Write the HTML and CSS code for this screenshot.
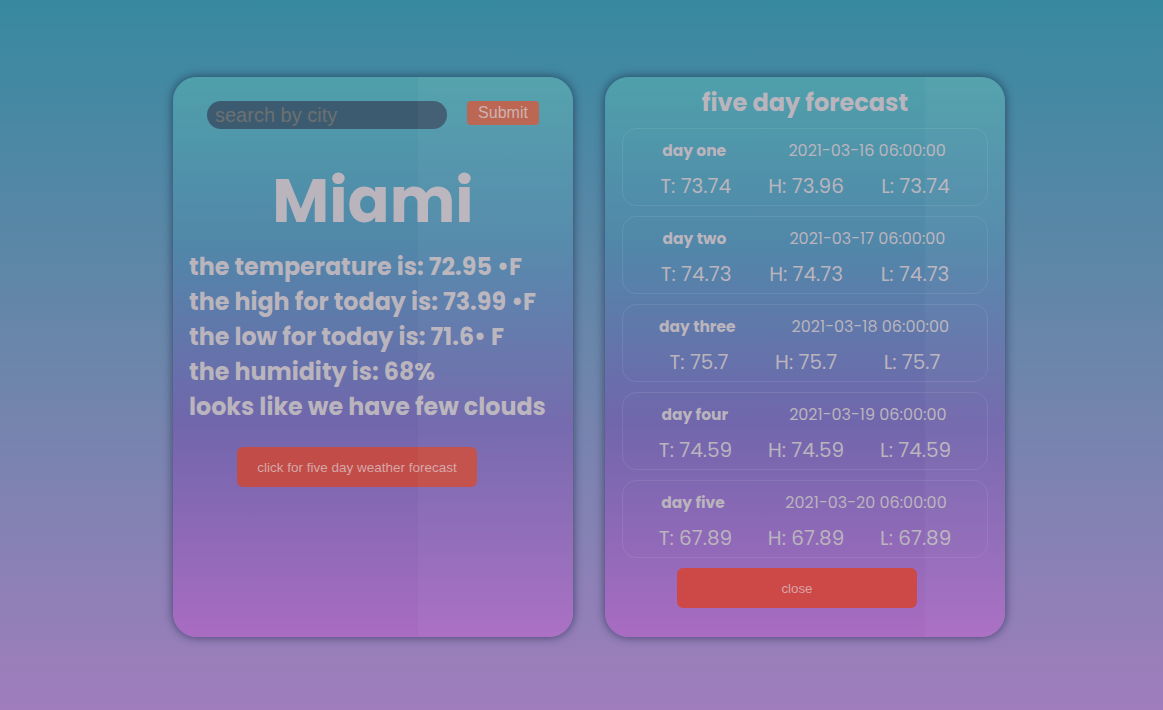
FILE: index.html
```html
<!DOCTYPE html>
<html>
<head>
<meta charset="utf-8">
<link rel="stylesheet" href="styles.css">
</head>
<body>
<main class="page">
  <section class="card current">
    <div class="search-row">
      <input class="search" type="text" placeholder="search by city">
      <button class="submit">Submit</button>
    </div>
    <h1 class="city">Miami</h1>
    <div class="info">
      <p>the temperature is: 72.95 •F</p>
      <p>the high for today is: 73.99 •F</p>
      <p>the low for today is: 71.6• F</p>
      <p>the humidity is: 68%</p>
      <p>looks like we have few clouds</p>
    </div>
    <button class="forecast-btn">click for five day weather forecast</button>
  </section>

  <section class="card forecast">
    <h2 class="title">five day forecast</h2>
    <div class="days">
      <div class="day">
        <div class="day-top"><span class="day-name">day one</span><span class="date">2021-03-16 06:00:00</span></div>
        <div class="day-vals"><span>T: 73.74</span><span>H: 73.96</span><span>L: 73.74</span></div>
      </div>
      <div class="day">
        <div class="day-top"><span class="day-name">day two</span><span class="date">2021-03-17 06:00:00</span></div>
        <div class="day-vals"><span>T: 74.73</span><span>H: 74.73</span><span>L: 74.73</span></div>
      </div>
      <div class="day">
        <div class="day-top"><span class="day-name">day three</span><span class="date">2021-03-18 06:00:00</span></div>
        <div class="day-vals"><span>T: 75.7</span><span>H: 75.7</span><span>L: 75.7</span></div>
      </div>
      <div class="day">
        <div class="day-top"><span class="day-name">day four</span><span class="date">2021-03-19 06:00:00</span></div>
        <div class="day-vals"><span>T: 74.59</span><span>H: 74.59</span><span>L: 74.59</span></div>
      </div>
      <div class="day">
        <div class="day-top"><span class="day-name">day five</span><span class="date">2021-03-20 06:00:00</span></div>
        <div class="day-vals"><span>T: 67.89</span><span>H: 67.89</span><span>L: 67.89</span></div>
      </div>
    </div>
    <button class="close-btn">close</button>
  </section>
</main>
</body>
</html>
```

FILE: styles.css
```css
* { box-sizing: border-box; }
html, body { margin: 0; padding: 0; }
body {
  width: 1163px;
  height: 710px;
  overflow: hidden;
  background: linear-gradient(180deg, #37899f 0%, #6b86aa 50%, #a07dbd 100%);
  font-family: "Poppins", "Inter", "Open Sans", sans-serif;
  color: #bab4bd;
}
.page {
  display: flex;
  justify-content: center;
  gap: 32px;
  padding: 77px 0 0 15px;
}
.card {
  width: 400px;
  height: 560px;
  border-radius: 24px;
  background: linear-gradient(180deg, #4fa0ab 0%, #5187a9 30%, #7166ac 62%, #a96cc2 100%);
  box-shadow: 0 0 8px 1px rgba(20, 30, 60, 0.55);
  position: relative;
  overflow: hidden;
}
.card::after {
  content: "";
  position: absolute;
  top: 0; bottom: 0;
  width: 155px;
  right: 0;
  background: rgba(255, 255, 255, 0.035);
  pointer-events: none;
}
.current { display: flex; flex-direction: column; }
.search-row {
  display: flex;
  justify-content: space-between;
  align-items: flex-start;
  padding: 24px 34px 0;
}
.search {
  width: 240px;
  height: 28px;
  border: none;
  border-radius: 14px;
  background: #3d5b70;
  padding: 0 8px;
  font-family: "Liberation Sans", Arial, sans-serif;
  font-size: 20px;
  color: #6c7270;
  outline: none;
}
.search::placeholder { color: #6b7170; }
.submit {
  width: 72px;
  height: 24px;
  border: none;
  border-radius: 4px;
  background: #b9624d;
  color: #cdb0ae;
  font-family: "Liberation Sans", Arial, sans-serif;
  font-size: 16px;
  padding: 0;
}
.city {
  margin: 34px 0 0;
  text-align: center;
  font-size: 62px;
  line-height: 76px;
  font-weight: 700;
  color: #bab4bd;
}
.info { padding: 0 16px; margin-top: 10px; }
.info p {
  margin: 0;
  font-size: 23.8px;
  line-height: 35px;
  font-weight: 700;
  white-space: nowrap;
}
.forecast-btn {
  align-self: flex-start;
  margin: 23px 0 0 64px;
  width: 240px;
  height: 40px;
  border: none;
  border-radius: 6px;
  background: #c24c47;
  color: #d6a7a8;
  font-family: "Liberation Sans", Arial, sans-serif;
  font-size: 13.5px;
}
.forecast { display: flex; flex-direction: column; align-items: center; }
.forecast::after { width: 80px; }
.title {
  margin: 10px 0 0;
  font-size: 24px;
  line-height: 32px;
  font-weight: 700;
  text-align: center;
}
.days {
  display: flex;
  flex-direction: column;
  gap: 10px;
  margin-top: 9px;
  width: 366px;
}
.day {
  height: 78px;
  border: 1px solid rgba(255, 255, 255, 0.09);
  border-radius: 14px;
  display: flex;
  flex-direction: column;
  padding-top: 11px;
}
.day-top {
  display: flex;
  justify-content: space-around;
  align-items: baseline;
  padding: 0 10px 0 8px;
}
.day-name { font-size: 15.5px; font-weight: 700; line-height: 22px; }
.date { font-size: 16px; font-weight: 400; line-height: 22px; }
.day-vals {
  display: flex;
  justify-content: space-evenly;
  align-items: baseline;
  margin-top: 11px;
}
.day-vals span { font-size: 20px; line-height: 26px; }
.close-btn {
  margin: 10px 16px 0 0;
  width: 240px;
  height: 40px;
  border: none;
  border-radius: 6px;
  background: #cc4948;
  color: #d9a4a6;
  font-family: "Liberation Sans", Arial, sans-serif;
  font-size: 13.3px;
}
```
